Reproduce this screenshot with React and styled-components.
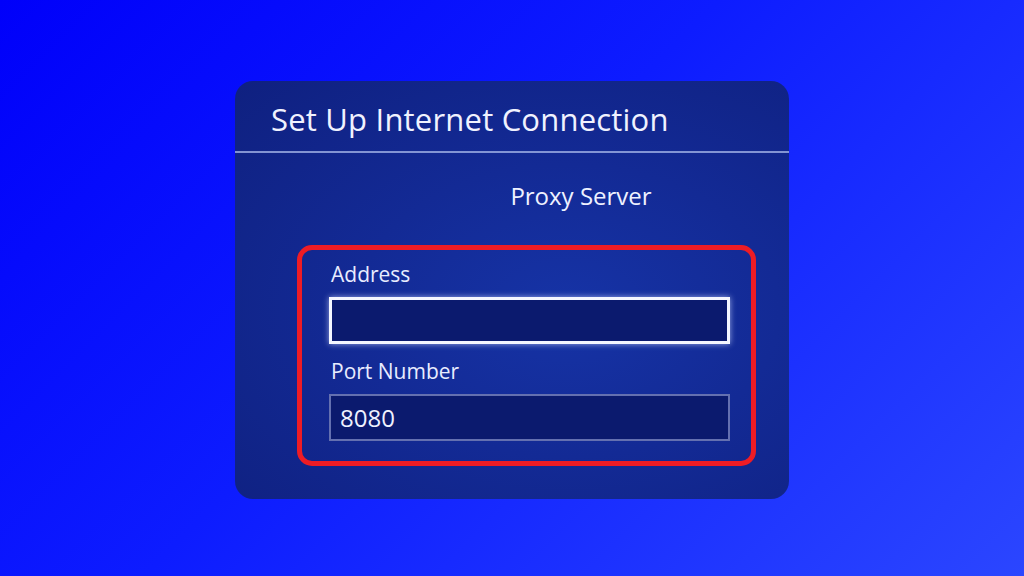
import styled, { createGlobalStyle } from "styled-components";

const GlobalStyle = createGlobalStyle`
  html, body {
    margin: 0;
    padding: 0;
  }
  body {
    font-family: "Open Sans", "Noto Sans", sans-serif;
  }
`;

const Page = styled.div`
  width: 1024px;
  height: 576px;
  background: linear-gradient(135deg, #0000fa 0%, #0d1cff 45%, #2b46ff 100%);
  display: flex;
  justify-content: center;
  align-items: flex-start;
  padding-top: 81px;
  box-sizing: border-box;
`;

const Panel = styled.div`
  width: 554px;
  height: 418px;
  border-radius: 18px;
  background: radial-gradient(
    ellipse at 60% 55%,
    #1633a6 0%,
    #132a95 45%,
    #0f2080 100%
  );
  display: flex;
  flex-direction: column;
  color: #eef1ff;
  overflow: hidden;
`;

const Header = styled.div`
  height: 72px;
  flex-shrink: 0;
  display: flex;
  align-items: center;
  padding: 6px 36px 0;
  box-sizing: border-box;
  border-bottom: 2px solid rgba(170, 185, 235, 0.75);
`;

const Title = styled.h1`
  margin: 0;
  font-weight: 400;
  font-size: 31px;
  letter-spacing: 0.2px;
  color: #f0f2ff;
`;

const Subtitle = styled.div`
  font-size: 24px;
  text-align: center;
  margin: 26px 0 0 138px;
  color: #eef1ff;
`;

const Highlight = styled.div`
  margin: 33px 33px 0 62px;
  height: 221px;
  flex-shrink: 0;
  box-sizing: border-box;
  border: 5px solid #ee1c25;
  border-radius: 15px;
  padding: 10px 21px 0 27px;
  display: flex;
  flex-direction: column;
`;

const Label = styled.div`
  font-size: 21px;
  padding-left: 2px;
  line-height: 28px;
  color: #e8ecff;
  margin-top: ${(p) => p.$top || 0}px;
`;

const Field = styled.div`
  height: 47px;
  margin-top: 9px;
  box-sizing: border-box;
  background: #0b1a6e;
  border: ${(p) =>
    p.$focused ? "3px solid #f4f6ff" : "2px solid rgba(160, 170, 220, 0.6)"};
  box-shadow: ${(p) =>
    p.$focused ? "0 0 6px rgba(210, 220, 255, 0.7)" : "none"};
  display: flex;
  align-items: center;
  padding-left: 9px;
  font-size: 24px;
  color: #eef1ff;
`;

export default function App() {
  return (
    <>
      <GlobalStyle />
      <Page>
        <Panel>
          <Header>
            <Title>Set Up Internet Connection</Title>
          </Header>
          <Subtitle>Proxy Server</Subtitle>
          <Highlight>
            <Label>Address</Label>
            <Field $focused />
            <Label $top={13}>Port Number</Label>
            <Field>8080</Field>
          </Highlight>
        </Panel>
      </Page>
    </>
  );
}
